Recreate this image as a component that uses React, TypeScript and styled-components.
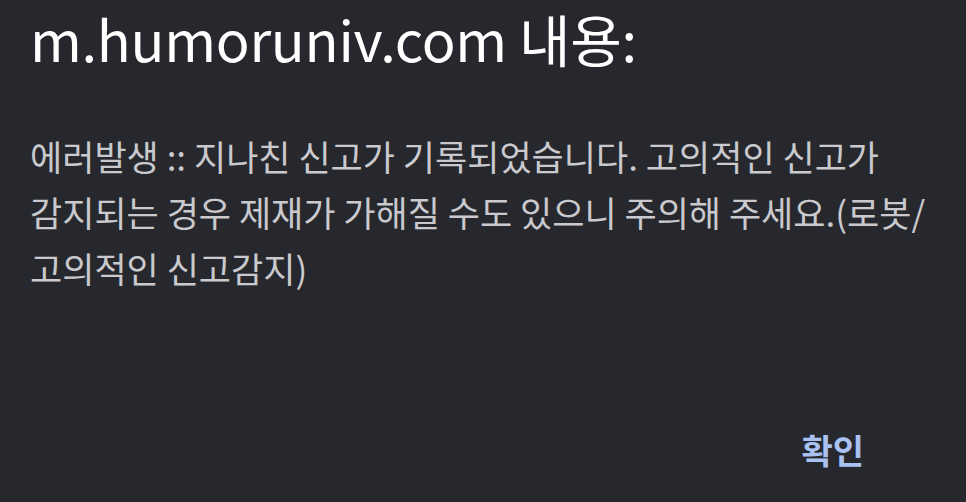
import { createGlobalStyle, styled } from 'styled-components'

const GlobalStyle = createGlobalStyle`
  html, body {
    margin: 0;
    padding: 0;
    background: #27282d;
  }
  body {
    font-family: 'Noto Sans CJK KR', 'Noto Sans', sans-serif;
  }
`

const DialogStyled = styled.div`
  width: 966px;
  height: 502px;
  box-sizing: border-box;
  background: #27282d;
  display: flex;
  flex-direction: column;
  padding: 10px 30px 0 30px;
`

const Title = styled.h1`
  margin: 0;
  font-weight: 400;
  font-size: 56px;
  line-height: 56px;
  color: #ffffff;
  letter-spacing: -0.3px;
`

const Message = styled.p`
  margin: 62px 0 0 0;
  font-weight: 400;
  font-size: 35px;
  line-height: 56px;
  color: #c9c9ce;
  max-width: 910px;
`

const Actions = styled.div`
  margin-top: auto;
  display: flex;
  justify-content: flex-end;
  padding: 0 72px 28px 0;
`

const ConfirmButton = styled.button`
  background: transparent;
  border: none;
  padding: 0;
  font-family: inherit;
  font-weight: 700;
  font-size: 34px;
  line-height: 48px;
  color: #a9c2f2;
  cursor: pointer;
`

export default function App() {
  return (
    <>
      <GlobalStyle />
      <DialogStyled>
        <Title>m.humoruniv.com 내용:</Title>
        <Message>
          에러발생 :: 지나친 신고가 기록되었습니다. 고의적인 신고가
          <br />
          감지되는 경우 제재가 가해질 수도 있으니 주의해 주세요.(로봇/
          <br />
          고의적인 신고감지)
        </Message>
        <Actions>
          <ConfirmButton>확인</ConfirmButton>
        </Actions>
      </DialogStyled>
    </>
  )
}
